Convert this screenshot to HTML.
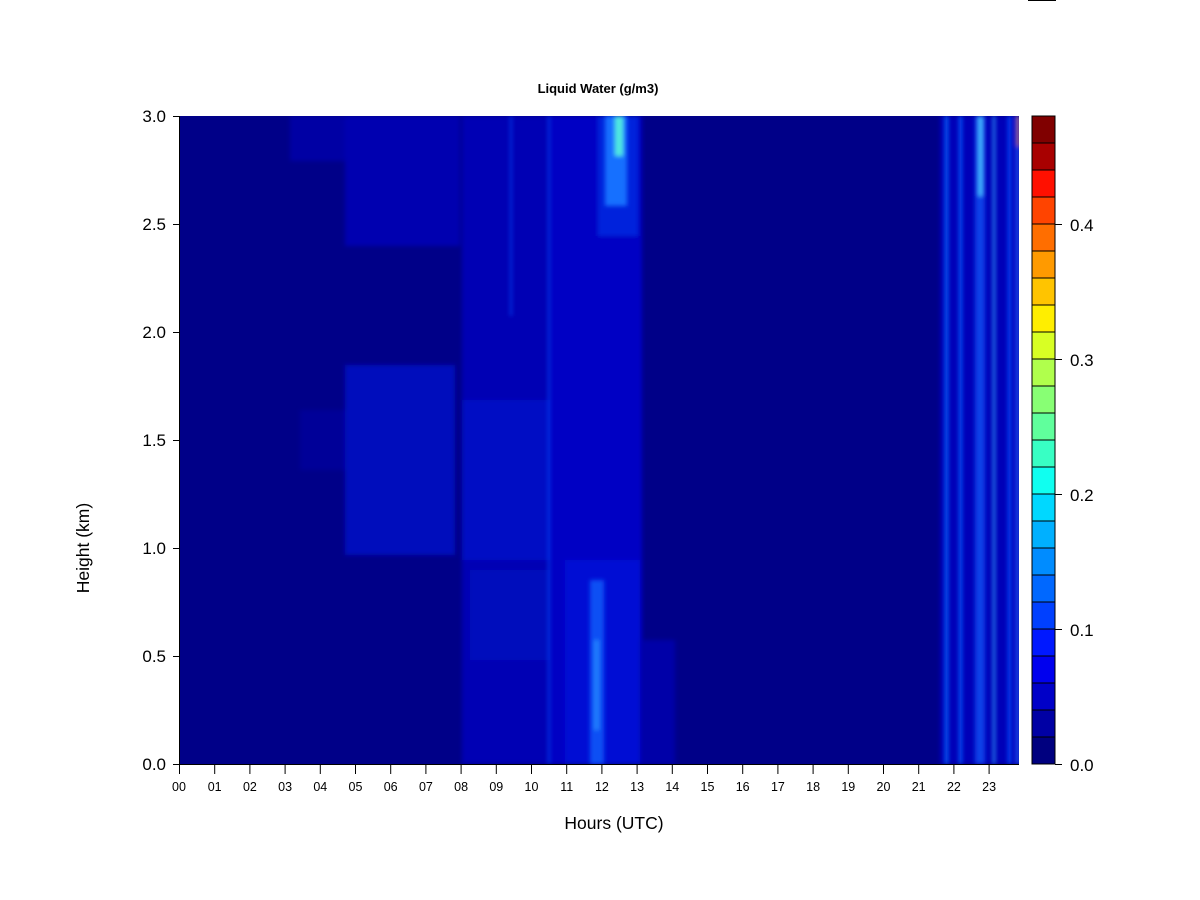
<!DOCTYPE html>
<html><head><meta charset="utf-8"><style>
html,body{margin:0;padding:0;background:#fff;width:1200px;height:900px;overflow:hidden}
svg text{font-family:"Liberation Sans",Arial,sans-serif}
</style></head><body>
<svg width="1200" height="900" viewBox="0 0 1200 900" xmlns="http://www.w3.org/2000/svg">
<defs>
<filter id="b" x="-10%" y="-10%" width="120%" height="120%" filterUnits="userSpaceOnUse"><feGaussianBlur stdDeviation="6"/></filter>
<filter id="b2" filterUnits="userSpaceOnUse" x="100" y="50" width="1000" height="800"><feGaussianBlur stdDeviation="2"/></filter>
<clipPath id="c"><rect x="179" y="116" width="840" height="648"/></clipPath>
</defs>
<rect x="1028" y="0" width="28" height="1" fill="#000"/>
<text x="598" y="93" font-size="13" font-weight="bold" text-anchor="middle">Liquid Water (g/m3)</text>
<g clip-path="url(#c)">
<rect x="179" y="116" width="840" height="648" fill="#000088"/>
<g filter="url(#b2)">
<rect x="290" y="116" width="170" height="45" fill="#0000a4"/>
<rect x="345" y="116" width="115" height="130" fill="#0000b0"/>
<rect x="345" y="365" width="110" height="190" fill="#0008bc"/>
<rect x="300" y="410" width="45" height="60" fill="#000098"/>
<rect x="462" y="116" width="90" height="648" fill="#0000b4"/>
<rect x="462" y="400" width="90" height="160" fill="#0008c4"/>
<rect x="470" y="570" width="80" height="90" fill="#0008bc"/>
<rect x="550" y="116" width="92" height="648" fill="#0004c4"/>
<rect x="598" y="116" width="40" height="120" fill="#0020dc"/>
<rect x="565" y="560" width="75" height="204" fill="#0010d4"/>
<rect x="640" y="640" width="35" height="124" fill="#0000a8"/>
<rect x="940" y="116" width="79" height="648" fill="#0004b8"/>
</g>
<g filter="url(#b2)">
<rect x="605" y="116" width="22" height="90" fill="#1870ff"/>
<rect x="615" y="116" width="8" height="40" fill="#50e8e0"/>
<rect x="590" y="580" width="14" height="184" fill="#0c50f4"/>
<rect x="594" y="640" width="5" height="90" fill="#2480ff"/>
<rect x="548" y="116" width="2" height="648" fill="#0c40f0"/>
<rect x="510" y="116" width="2" height="200" fill="#0838e8"/>
<rect x="945" y="116" width="3" height="648" fill="#1070ff"/>
<rect x="959" y="116" width="3" height="648" fill="#1060ff"/>
<rect x="975" y="116" width="10" height="648" fill="#0840e8"/>
<rect x="978" y="116" width="5" height="80" fill="#40b0ff"/>
<rect x="993" y="116" width="2" height="648" fill="#30b0ff"/>
<rect x="1008" y="116" width="3" height="648" fill="#0a50ff"/>
<rect x="1016" y="116" width="3" height="648" fill="#2060ff"/>
<rect x="1017" y="116" width="2" height="30" fill="#ffa000"/>
</g>
</g>
<g stroke="#000" stroke-width="1" fill="none">
<line x1="173" y1="116.5" x2="179" y2="116.5"/><line x1="173" y1="224.5" x2="179" y2="224.5"/>
<line x1="173" y1="332.5" x2="179" y2="332.5"/><line x1="173" y1="440.5" x2="179" y2="440.5"/>
<line x1="173" y1="548.5" x2="179" y2="548.5"/><line x1="173" y1="656.5" x2="179" y2="656.5"/>
<line x1="173" y1="764.5" x2="179" y2="764.5"/>
<line x1="179.5" y1="764" x2="179.5" y2="116"/>
<line x1="179" y1="764.5" x2="1019" y2="764.5"/>
</g>
<g font-size="17" text-anchor="end">
<text x="166" y="122">3.0</text><text x="166" y="230">2.5</text><text x="166" y="338">2.0</text>
<text x="166" y="446">1.5</text><text x="166" y="554">1.0</text><text x="166" y="662">0.5</text><text x="166" y="770">0.0</text>
</g>
<g stroke="#000">
<line x1="179.5" y1="764" x2="179.5" y2="774"/><line x1="214.7" y1="764" x2="214.7" y2="774"/><line x1="249.9" y1="764" x2="249.9" y2="774"/><line x1="285.1" y1="764" x2="285.1" y2="774"/><line x1="320.3" y1="764" x2="320.3" y2="774"/><line x1="355.5" y1="764" x2="355.5" y2="774"/><line x1="390.7" y1="764" x2="390.7" y2="774"/><line x1="425.9" y1="764" x2="425.9" y2="774"/><line x1="461.1" y1="764" x2="461.1" y2="774"/><line x1="496.3" y1="764" x2="496.3" y2="774"/><line x1="531.5" y1="764" x2="531.5" y2="774"/><line x1="566.7" y1="764" x2="566.7" y2="774"/><line x1="601.9" y1="764" x2="601.9" y2="774"/><line x1="637.1" y1="764" x2="637.1" y2="774"/><line x1="672.3" y1="764" x2="672.3" y2="774"/><line x1="707.5" y1="764" x2="707.5" y2="774"/><line x1="742.7" y1="764" x2="742.7" y2="774"/><line x1="777.9" y1="764" x2="777.9" y2="774"/><line x1="813.1" y1="764" x2="813.1" y2="774"/><line x1="848.3" y1="764" x2="848.3" y2="774"/><line x1="883.5" y1="764" x2="883.5" y2="774"/><line x1="918.7" y1="764" x2="918.7" y2="774"/><line x1="953.9" y1="764" x2="953.9" y2="774"/><line x1="989.1" y1="764" x2="989.1" y2="774"/>
</g>
<g font-size="12.5" text-anchor="middle">
<text x="179" y="791">00</text><text x="214.7" y="791">01</text><text x="249.9" y="791">02</text><text x="285.1" y="791">03</text><text x="320.3" y="791">04</text><text x="355.5" y="791">05</text><text x="390.7" y="791">06</text><text x="425.9" y="791">07</text><text x="461.1" y="791">08</text><text x="496.3" y="791">09</text><text x="531.5" y="791">10</text><text x="566.7" y="791">11</text><text x="601.9" y="791">12</text><text x="637.1" y="791">13</text><text x="672.3" y="791">14</text><text x="707.5" y="791">15</text><text x="742.7" y="791">16</text><text x="777.9" y="791">17</text><text x="813.1" y="791">18</text><text x="848.3" y="791">19</text><text x="883.5" y="791">20</text><text x="918.7" y="791">21</text><text x="953.9" y="791">22</text><text x="989.1" y="791">23</text>
</g>
<text x="614" y="829" font-size="17.5" text-anchor="middle">Hours (UTC)</text>
<text transform="translate(89,548) rotate(-90)" font-size="17.5" text-anchor="middle">Height (km)</text>
<g stroke="#000" stroke-width="1">
<rect x="1032" y="737" width="23" height="27" fill="#00007f"/>
<rect x="1032" y="710" width="23" height="27" fill="#0000a4"/>
<rect x="1032" y="683" width="23" height="27" fill="#0000c8"/>
<rect x="1032" y="656" width="23" height="27" fill="#0000ee"/>
<rect x="1032" y="629" width="23" height="27" fill="#0018ff"/>
<rect x="1032" y="602" width="23" height="27" fill="#0040ff"/>
<rect x="1032" y="575" width="23" height="27" fill="#0068ff"/>
<rect x="1032" y="548" width="23" height="27" fill="#008cff"/>
<rect x="1032" y="521" width="23" height="27" fill="#00b0ff"/>
<rect x="1032" y="494" width="23" height="27" fill="#00d8ff"/>
<rect x="1032" y="467" width="23" height="27" fill="#10fff0"/>
<rect x="1032" y="440" width="23" height="27" fill="#38ffc4"/>
<rect x="1032" y="413" width="23" height="27" fill="#60ff9c"/>
<rect x="1032" y="386" width="23" height="27" fill="#88ff74"/>
<rect x="1032" y="359" width="23" height="27" fill="#b0ff4c"/>
<rect x="1032" y="332" width="23" height="27" fill="#d8ff24"/>
<rect x="1032" y="305" width="23" height="27" fill="#ffee00"/>
<rect x="1032" y="278" width="23" height="27" fill="#ffc400"/>
<rect x="1032" y="251" width="23" height="27" fill="#ff9a00"/>
<rect x="1032" y="224" width="23" height="27" fill="#ff6e00"/>
<rect x="1032" y="197" width="23" height="27" fill="#ff4400"/>
<rect x="1032" y="170" width="23" height="27" fill="#ff1000"/>
<rect x="1032" y="143" width="23" height="27" fill="#a80000"/>
<rect x="1032" y="116" width="23" height="27" fill="#800000"/>
</g>
<g stroke="#000">
<line x1="1055" y1="764.5" x2="1062" y2="764.5"/><line x1="1055" y1="629.5" x2="1062" y2="629.5"/><line x1="1055" y1="494.5" x2="1062" y2="494.5"/><line x1="1055" y1="359.5" x2="1062" y2="359.5"/><line x1="1055" y1="224.5" x2="1062" y2="224.5"/>
</g>
<g font-size="17">
<text x="1070" y="771">0.0</text><text x="1070" y="636">0.1</text><text x="1070" y="501">0.2</text><text x="1070" y="366">0.3</text><text x="1070" y="231">0.4</text>
</g>
</svg>
</body></html>
